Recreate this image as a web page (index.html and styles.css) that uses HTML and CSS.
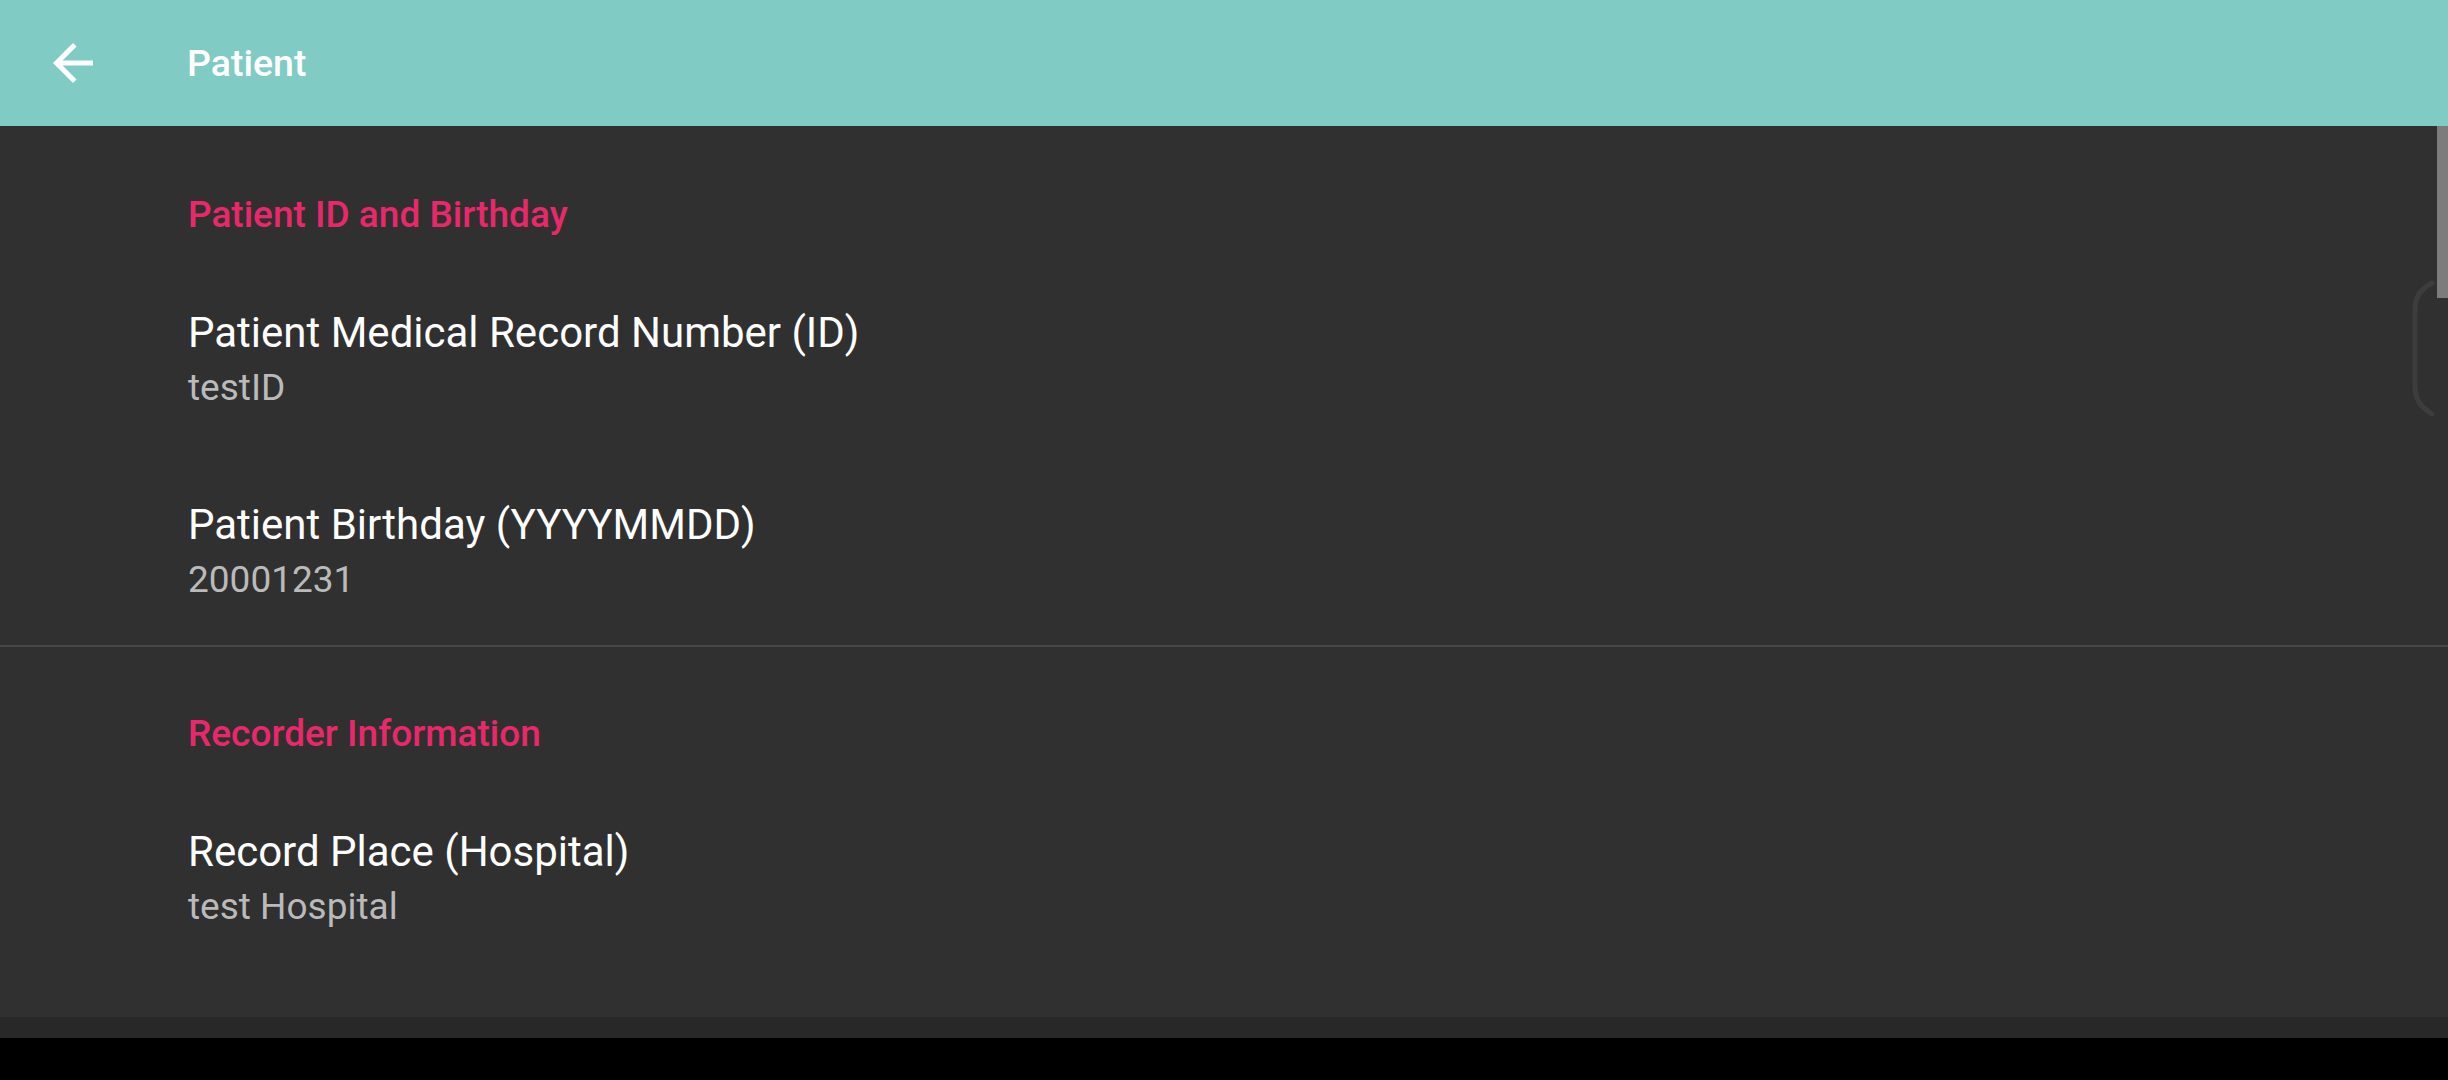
FILE: index.html
```html
<!DOCTYPE html>
<html lang="en">
<head>
<meta charset="utf-8">
<title>Patient</title>
<link rel="stylesheet" href="styles.css">
</head>
<body>
<div class="screen">
  <header class="toolbar">
    <svg class="back" viewBox="0 0 24 24" width="60" height="60" aria-hidden="true">
      <path d="M20 11H7.83l5.59-5.59L12 4l-8 8 8 8 1.41-1.41L7.83 13H20v-2z" fill="#ffffff"/>
    </svg>
    <h1 class="title">Patient</h1>
  </header>
  <main class="list">
    <section class="category">
      <h2 class="cat-title">Patient ID and Birthday</h2>
      <div class="pref">
        <div class="pref-title">Patient Medical Record Number (ID)</div>
        <div class="pref-summary">testID</div>
      </div>
      <div class="pref">
        <div class="pref-title">Patient Birthday (YYYYMMDD)</div>
        <div class="pref-summary">20001231</div>
      </div>
    </section>
    <div class="divider"></div>
    <section class="category">
      <h2 class="cat-title">Recorder Information</h2>
      <div class="pref">
        <div class="pref-title">Record Place (Hospital)</div>
        <div class="pref-summary">test Hospital</div>
      </div>
    </section>
    <div class="scrollbar"></div>
    <svg class="edge" viewBox="0 0 26 137" width="26" height="137" aria-hidden="true">
      <path d="M23 3 C12 9, 6 16, 6 30 L6 106 C6 120, 12 127, 23 134" fill="none" stroke="#3d3d3d" stroke-width="5" stroke-linecap="round"/>
    </svg>
  </main>
  <div class="strip"></div>
  <div class="navbar"></div>
</div>
</body>
</html>
```
FILE: styles.css
```css
* {
  box-sizing: border-box;
}

html, body {
  margin: 0;
  padding: 0;
  background: #000000;
}

body {
  font-family: Roboto, "Noto Sans", "Liberation Sans", sans-serif;
}

.screen {
  width: 2448px;
  height: 1080px;
  display: flex;
  flex-direction: column;
  overflow: hidden;
}

.toolbar {
  height: 126px;
  flex: 0 0 126px;
  background: #80cbc4;
  display: flex;
  align-items: center;
  padding-left: 43px;
}

.back {
  display: block;
  flex: 0 0 auto;
}

.title {
  margin: 0 0 0 84px;
  font-size: 37.5px;
  font-weight: 500;
  color: #ffffff;
  line-height: 52px;
}

.list {
  position: relative;
  flex: 0 0 891px;
  background: #303030;
}

.category {
  display: flex;
  flex-direction: column;
}

.cat-title {
  margin: 0;
  padding: 65px 0 0 188px;
  font-size: 37px;
  font-weight: 500;
  line-height: 48px;
  color: #e9286c;
}

.pref {
  padding: 68px 0 15px 188px;
  display: flex;
  flex-direction: column;
}

.pref-title {
  font-size: 42px;
  line-height: 52px;
  color: #ffffff;
}

.pref-summary {
  font-size: 37px;
  line-height: 57px;
  color: #bababa;
}

.divider {
  margin-top: 22px;
  height: 2px;
  background: #474747;
}

.category + .divider + .category .cat-title {
  padding-top: 63px;
}

.scrollbar {
  position: absolute;
  right: 0;
  top: 0;
  width: 11px;
  height: 172px;
  background: #7c7c7c;
}

.edge {
  position: absolute;
  left: 2409px;
  top: 154px;
}

.strip {
  flex: 0 0 21px;
  background: #282828;
}

.navbar {
  flex: 1 1 auto;
  background: #000000;
}
```
